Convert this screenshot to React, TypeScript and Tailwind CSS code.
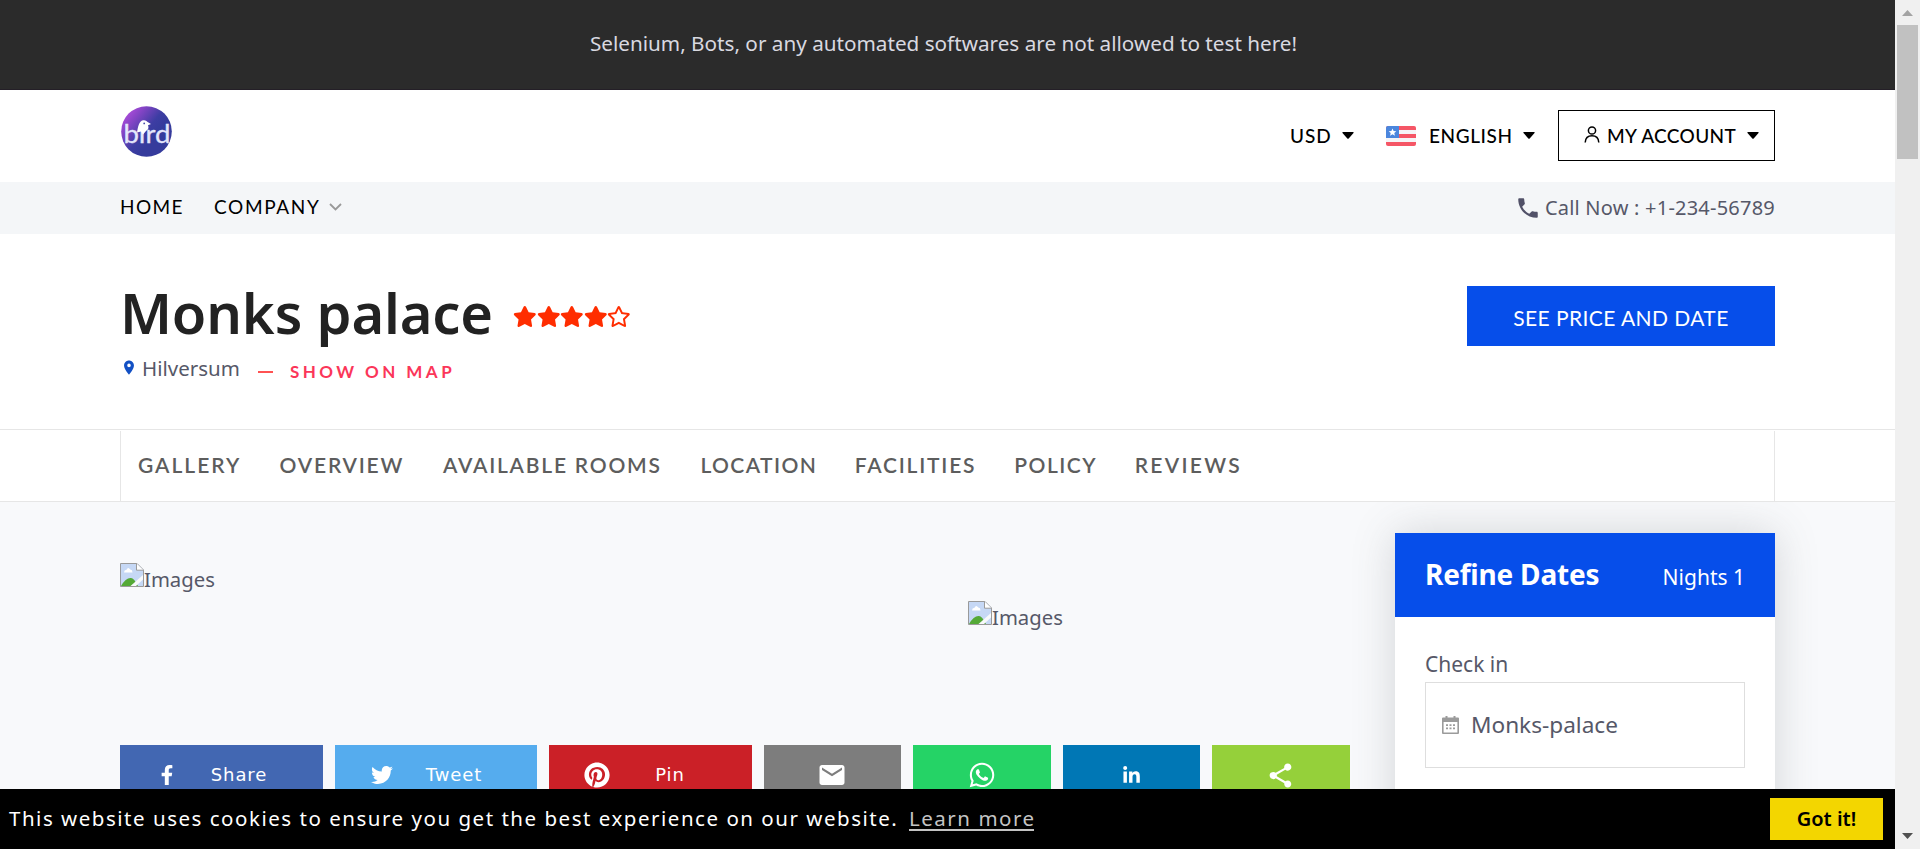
import type { ReactNode } from 'react';
import { FaFacebookF, FaRegStar, FaStar, FaTwitter, FaPinterest, FaWhatsapp, FaLinkedinIn } from 'react-icons/fa';
import { MdEmail, MdLocationOn, MdPhone, MdShare } from 'react-icons/md';

const Caret = ({ className = '' }: { className?: string }) => (
  <svg viewBox="0 0 12 7" className={`h-[7px] w-3 shrink-0 ${className}`}>
    <path d="M0.8 0H11.2Q12 0.4 11.5 1L6.7 6.4Q6 7 5.3 6.4L0.5 1Q0 0.4 0.8 0Z" fill="#000" />
  </svg>
);

const Logo = () => (
  <svg viewBox="0 0 51 51" className="h-[51px] w-[51px]">
    <defs>
      <linearGradient id="logo" x1="0.05" y1="0.1" x2="0.65" y2="0.6">
        <stop offset="0" stopColor="#b84fe0" />
        <stop offset="0.3" stopColor="#8a45c8" />
        <stop offset="0.75" stopColor="#3d3da3" />
        <stop offset="1" stopColor="#353b9c" />
      </linearGradient>
    </defs>
    <circle cx="25.5" cy="25.5" r="25.3" fill="url(#logo)" />
    <text x="2.4" y="37.2" textLength="47" lengthAdjust="spacingAndGlyphs" fill="#e3e6fb" stroke="#e3e6fb" strokeWidth="0.3" fontSize="25" fontFamily="Lato, sans-serif">bırd</text>
    <path d="M16 26.5C17 21 18 15 22 14.3C24.5 13.8 26 15.2 27 16.3L30 18L27 19.2C28 21.5 27.5 23.5 25 25L22 28.5L20 25.5Z" fill="#fff" />
    <circle cx="23.2" cy="17.4" r="0.9" fill="#454aa8" />
  </svg>
);

const Flag = () => (
  <svg viewBox="0 0 30 20" className="h-5 w-[30px] shrink-0">
    <defs><clipPath id="flag"><rect width="30" height="20" rx="2" /></clipPath></defs>
    <g clipPath="url(#flag)">
      <rect width="30" height="20" fill="#f55666" />
      <rect y="4" width="30" height="4" fill="#f5f5f7" />
      <rect y="12" width="30" height="4" fill="#f5f5f7" />
      <rect width="13" height="12" fill="#4b86dd" />
      <path d="M6.5 2.4l1.1 2.5 2.7.3-2 1.8.6 2.7-2.4-1.4-2.4 1.4.6-2.7-2-1.8 2.7-.3z" fill="#fff" />
    </g>
  </svg>
);

const MissingImage = () => (
  <span className="flex items-start">
    <svg viewBox="0 0 24 24" className="h-6 w-6">
      <path d="M0.5 0.5H17L23.5 7V23.5H0.5Z" fill="#c6d8f5" stroke="#9a9a9a" />
      <path d="M4 9.500Q4 7 6.500 6.800Q8 3.500 10.300 6.600Q12.500 6.800 12.500 9.500Z" fill="#fff" />
      <path d="M1 23Q6 14.500 11 15Q14 15.200 18 23Z" fill="#54a936" />
      <path d="M16.500 0.500V7.200H23.500" fill="#fff" stroke="#9a9a9a" />
      <path d="M10.500 23L23 12V16.500L16 23Z" fill="#f8f9fb" />
    </svg>
    <span className="mt-[2px] text-[20.3px] leading-[28px]">Images</span>
  </span>
);

const sections = [
  { label: 'GALLERY', cls: 'w-[141.6px] tracking-[1.99px]' },
  { label: 'OVERVIEW', cls: 'w-[163.3px] tracking-[1.78px]' },
  { label: 'AVAILABLE ROOMS', cls: 'w-[257.5px] tracking-[1.78px]' },
  { label: 'LOCATION', cls: 'w-[154.3px] tracking-[1.4px]' },
  { label: 'FACILITIES', cls: 'w-[159.5px] tracking-[1.8px]' },
  { label: 'POLICY', cls: 'w-[120.5px] tracking-[1.49px]' },
  { label: 'REVIEWS', cls: 'tracking-[2.3px]' },
];

const shares: { icon: ReactNode; label?: string; cls: string }[] = [
  { icon: <FaFacebookF className="ml-[37px] size-5" />, label: 'Share', cls: 'w-[203px] bg-[#4267b2]' },
  { icon: <FaTwitter className="ml-[36px] size-[22px]" />, label: 'Tweet', cls: 'w-[202px] bg-[#55acee]' },
  { icon: <FaPinterest className="ml-[35px] size-[26px]" />, label: 'Pin', cls: 'w-[203px] bg-[#cb2027]' },
  { icon: <MdEmail className="-ml-0.5 size-[30px]" />, cls: 'w-[137px] bg-[#7d7d7d]' },
  { icon: <FaWhatsapp className="size-7" />, cls: 'w-[138px] bg-[#25d366]' },
  { icon: <FaLinkedinIn className="size-[19px]" />, cls: 'w-[137px] bg-[#0077b5]' },
  { icon: <MdShare className="-ml-px size-[29px]" />, cls: 'w-[138px] bg-[#95d03a]' },
];

const Calendar = () => (
  <svg viewBox="0 0 17 18" className="h-[18px] w-[17px] shrink-0">
    <path d="M3.5 0h2v1.5h6V0h2v1.5H16q1 0 1 1V17q0 1-1 1H1q-1 0-1-1V2.500q0-1 1-1h2.500zM1.600 6v10.400h13.800V6z" fill="#9b9b9b" fillRule="evenodd" />
    <path d="M4 8.200h2v1.800H4zM7.500 8.200h2v1.800h-2zM11 8.200h2v1.800h-2zM4 11.400h2v1.800H4zM7.500 11.400h2v1.800h-2zM11 11.400h2v1.800h-2z" fill="#9b9b9b" />
  </svg>
);

export default function App() {
  return (
    <div className="flex h-[849px] w-[1920px] overflow-hidden bg-white font-['Noto_Sans',sans-serif] text-[#565868]">
      <div className="flex w-[1895px] flex-col">
        <div className="flex h-[90px] shrink-0 justify-center border-b border-[#241f27] bg-[#2b2b2b] pr-2 text-[20.7px] leading-[87px] text-[#d9d9e0]">
          Selenium, Bots, or any automated softwares are not allowed to test here!
        </div>

        <header className="flex h-[92px] shrink-0 items-start justify-between pl-[121px] pr-[120px] pt-4">
          <Logo />
          <div className="mt-1 flex h-[51px] items-center font-['Lato',sans-serif] text-[19px] font-medium text-black">
            <span className="w-[52px] pt-0.5 tracking-[0.9px]">USD</span>
            <Caret />
            <span className="ml-8"><Flag /></span>
            <span className="ml-[13px] w-[94px] pt-0.5 tracking-[0.6px]">ENGLISH</span>
            <Caret />
            <button className="ml-[23px] flex h-[51px] w-[217px] items-center border border-black pl-[25px]">
              <svg viewBox="0 0 16 17" className="-mt-[3px] h-[17px] w-4" fill="none" stroke="#000" strokeWidth="1.5">
                <circle cx="8" cy="4.500" r="3.600" />
                <path d="M1.200 16.500C1.500 11.500 4.500 9.800 8 9.800S14.500 11.500 14.800 16.500" />
              </svg>
              <span className="ml-[7px] w-[140px] pt-0.5 text-left tracking-[0.35px]">MY ACCOUNT</span>
              <Caret />
            </button>
          </div>
        </header>

        <nav className="flex h-[52px] shrink-0 items-center justify-between bg-[#f4f6f8] px-[120px] pb-[2px]">
          <div className="flex items-center font-['Lato',sans-serif] text-[19px] text-black">
            <span className="w-[94px] tracking-[1.41px]">HOME</span>
            <span className="w-[115px] tracking-[1.65px]">COMPANY</span>
            <svg viewBox="0 0 13 8" className="h-2 w-[13px]" fill="none" stroke="#999" strokeWidth="1.800"><path d="M1 1L6.500 6.500L12 1" /></svg>
          </div>
          <div className="flex items-center pt-px text-[20px] tracking-[0.22px]">
            <MdPhone className="mr-1 size-[26px] text-[#515168]" />
            <span>Call Now : +1-234-56789</span>
          </div>
        </nav>

        <section className="flex h-[195px] shrink-0 items-start justify-between px-[120px]">
          <div>
            <div className="flex items-center pt-[39px]">
              <h1 className="w-[393px] whitespace-nowrap text-[56px] font-semibold leading-[78px] tracking-[-0.15px] text-[#222]">Monks palace</h1>
              <div className="mt-[9px] flex text-[#ff2d00]">
                {[0, 1, 2, 3].map((i) => <FaStar key={i} className="h-[21px] w-[23.6px]" />)}
                <FaRegStar className="h-[21px] w-[23.6px]" />
              </div>
            </div>
            <div className="mt-px flex items-center">
              <MdLocationOn className="-ml-px -mt-[3px] h-[17px] w-[20px] text-[#1250c4]" />
              <span className="ml-[3px] w-[116px] pb-0.5 text-[20.5px] leading-8">Hilversum</span>
              <span className="mt-[5px] h-[2px] w-[15px] bg-[#ff5252]" />
              <span className="ml-[17px] mt-[6px] font-['Lato',sans-serif] text-[17px] font-bold leading-6 tracking-[3.45px] text-[#fb3659]">SHOW ON MAP</span>
            </div>
          </div>
          <button className="mt-[52px] h-[60px] w-[308px] bg-[#064eea] pt-[3px] font-['Lato',sans-serif] text-[21px] leading-[55px] tracking-[0.42px] text-white">SEE PRICE AND DATE</button>
        </section>

        <div className="h-[73px] shrink-0 border-y border-[#e6e6e6] px-[120px] pt-px">
          <div className="flex h-[70px] items-center border-x border-[#e6e6e6] pb-0.5 pl-[17px] font-['Lato',sans-serif] text-[21px] font-semibold text-[#5d5d5d]">
            {sections.map((s) => <a key={s.label} className={`shrink-0 whitespace-nowrap ${s.cls}`}>{s.label}</a>)}
          </div>
        </div>

        <main className="flex min-h-0 flex-1 justify-between overflow-hidden bg-[#f8f9fb] px-[120px]">
          <div className="w-[1230px]">
            <div className="flex h-[243px] pt-[61px]">
              <div className="w-[848px]"><MissingImage /></div>
              <div className="pt-[38px]"><MissingImage /></div>
            </div>
            <div className="flex justify-between">
              {shares.map((s, i) => (
                <div key={i} className={`flex h-[60px] items-center text-white ${s.label ? '' : 'justify-center'} ${s.cls}`}>
                  {s.icon}
                  {s.label && <span className="flex-1 pb-px pr-[22px] text-center font-['DejaVu_Sans',sans-serif] text-[18px] tracking-[0.9px]">{s.label}</span>}
                </div>
              ))}
            </div>
          </div>
          <aside className="mt-[31px] h-[420px] w-[380px] bg-white shadow-[0_0_40px_rgba(82,85,90,0.22)]">
            <div className="flex h-[84px] items-baseline justify-between bg-[#064eea] px-[30px] pt-[20px] text-white">
              <h2 className="text-[28px] font-bold leading-[42px] tracking-[-0.2px]">Refine Dates</h2>
              <span className="text-[21px]">Nights 1</span>
            </div>
            <div className="px-[30px] pt-8">
              <div className="text-[21px] leading-[30px]">Check in</div>
              <div className="mt-[3px] flex h-[86px] items-center border border-[#dedede] pl-4">
                <Calendar />
                <span className="ml-3 text-[22.6px]">Monks-palace</span>
              </div>
            </div>
          </aside>
        </main>

        <div className="flex h-[60px] shrink-0 items-center bg-black pl-[9px] pr-3 text-[20.5px] text-white">
          <span className="w-[900px] whitespace-nowrap pb-0.5 tracking-[1.52px]">This website uses cookies to ensure you get the best experience on our website.</span>
          <a className="w-[125px] whitespace-nowrap border-b-2 border-[#c4c4c4] leading-[21px] tracking-[1.52px] text-[#c4c4c4]">Learn more</a>
          <button className="ml-auto h-[42px] w-[113px] bg-[#f3d600] pb-px text-[20px] font-semibold text-black">Got it!</button>
        </div>
      </div>

      <div className="flex w-[25px] flex-col items-center bg-[#f0f0f0] pr-px">
        <svg viewBox="0 0 11 6" className="mt-[10px] h-[6px] w-[11px]"><path d="M0 6L5.500 0L11 6Z" fill="#a3a3a3" /></svg>
        <div className="mt-[9px] h-[134px] w-[21px] bg-[#c1c1c1]" />
        <svg viewBox="0 0 11 6" className="mb-[10px] mt-auto h-[6px] w-[11px]"><path d="M0 0L5.500 6L11 0Z" fill="#505050" /></svg>
      </div>
    </div>
  );
}
